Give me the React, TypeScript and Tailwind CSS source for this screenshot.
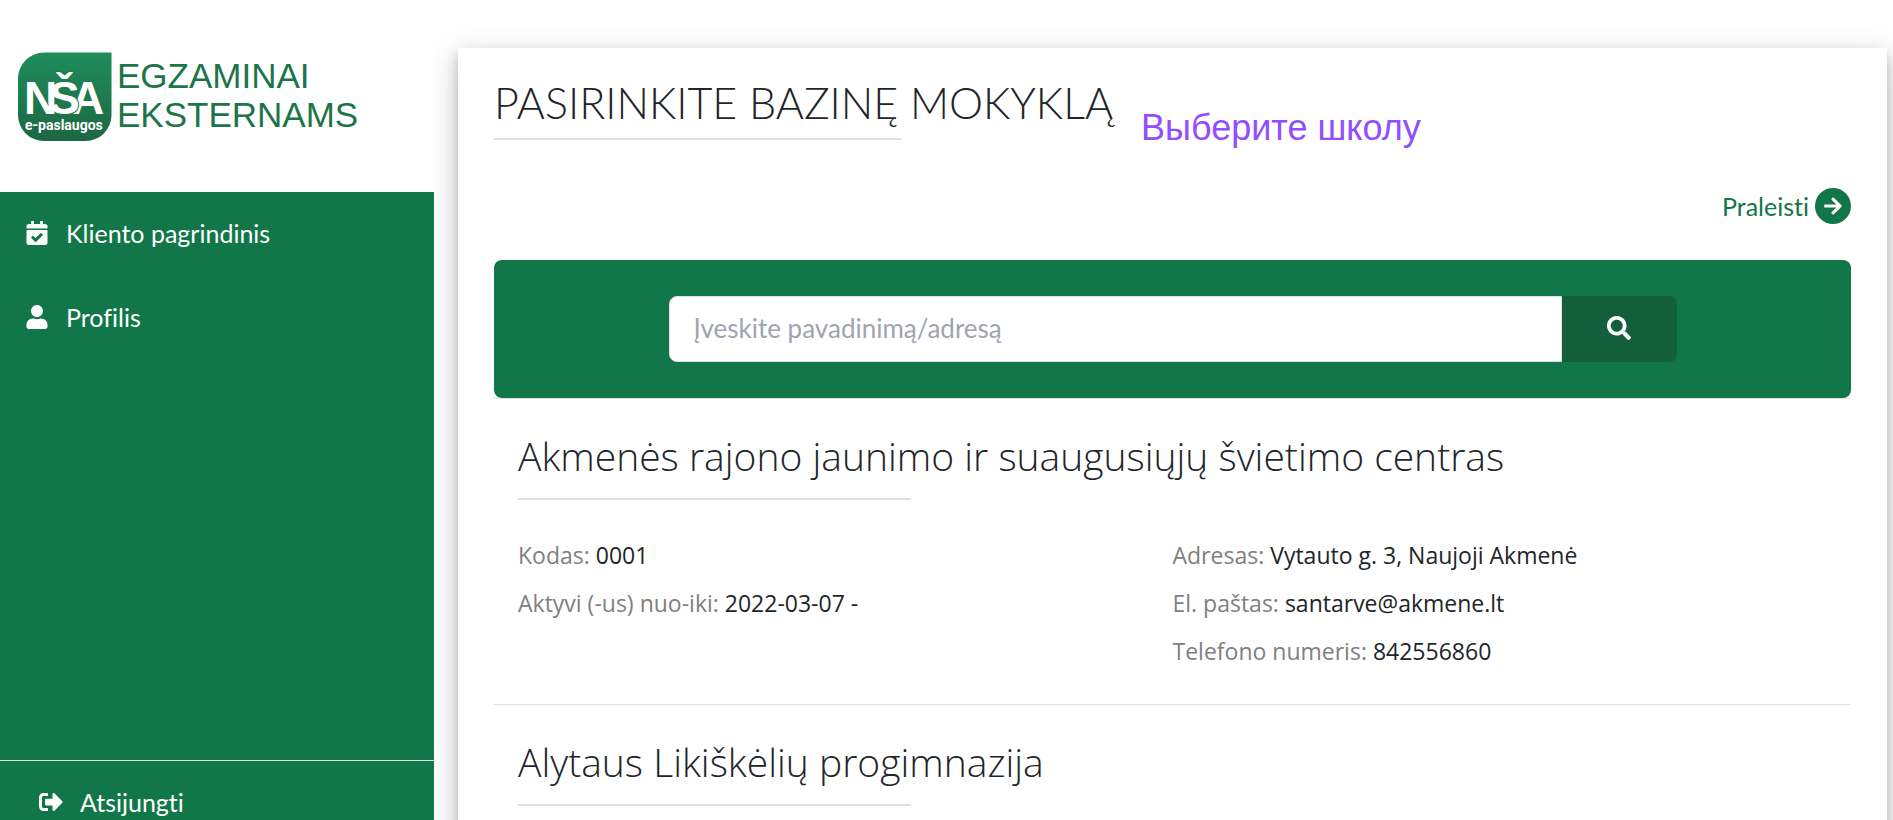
import type { IconType } from 'react-icons'
import { FaArrowRight, FaCalendarCheck, FaSearch, FaSignOutAlt, FaUser } from 'react-icons/fa'

interface School {
    name: string
    left: [string, string][]
    right: [string, string][]
}

const schools: School[] = [
    {
        name: 'Akmenės rajono jaunimo ir suaugusiųjų švietimo centras',
        left: [
            ['Kodas:', '0001'],
            ['Aktyvi (-us) nuo-iki:', '2022-03-07 -'],
        ],
        right: [
            ['Adresas:', 'Vytauto g. 3, Naujoji Akmenė'],
            ['El. paštas:', 'santarve@akmene.lt'],
            ['Telefono numeris:', '842556860'],
        ],
    },
    {
        name: 'Alytaus Likiškėlių progimnazija',
        left: [],
        right: [],
    },
]

function Logo() {
    return (
        <svg width="94" height="90" viewBox="0 0 94 90" role="img" aria-label="NŠA e-paslaugos">
            <defs>
                <linearGradient id="logo-bg" x1="0" y1="0" x2="0" y2="1">
                    <stop offset="0" stopColor="#1f8d5b" />
                    <stop offset="1" stopColor="#1d6742" />
                </linearGradient>
            </defs>
            <path
                d="M26 0.5H93.5V63a26 26 0 0 1-26 26H26A26 26 0 0 1 0 63V26A26 26 0 0 1 26 0.5Z"
                fill="url(#logo-bg)"
            />
            <g fill="#fff" fontFamily="'Liberation Sans', sans-serif" fontWeight="700" fontSize="46">
                <text x="53" y="62">A</text>
                <text x="31" y="62" stroke="#1e7a4e" strokeWidth="2" paintOrder="stroke">Š</text>
                <text x="6" y="62">N</text>
            </g>
            <text x="7" y="78" fill="#fff" fontFamily="Roboto, sans-serif" fontWeight="700" fontSize="14">
                e-paslaugos
            </text>
        </svg>
    )
}

function NavItem({ icon: Icon, label }: { icon: IconType; label: string }) {
    return (
        <a href="#" className="flex h-[84px] items-center gap-[17px] px-[25px] pb-[2px]">
            <Icon className="size-6" />
            {label}
        </a>
    )
}

function Sidebar() {
    return (
        <aside className="z-10 flex h-screen w-[434px] shrink-0 flex-col bg-white">
            <div className="flex h-48 shrink-0 items-start gap-[5px] pt-[52px] pl-[18px]">
                <Logo />
                <div className="pt-1 font-['Liberation_Sans',sans-serif] text-[35px] leading-[39px] text-[#1c7549]">
                    EGZAMINAI
                    <br />
                    EKSTERNAMS
                </div>
            </div>
            <nav className="flex-1 bg-[#117748] text-white">
                <NavItem icon={FaCalendarCheck} label="Kliento pagrindinis" />
                <NavItem icon={FaUser} label="Profilis" />
            </nav>
            <div className="h-[60px] shrink-0 border-t border-[#dee2e6] bg-[#117748] pt-[23px] pl-[39px] text-white">
                <a href="#" className="flex items-center gap-[17px]">
                    <FaSignOutAlt className="size-6" />
                    Atsijungti
                </a>
            </div>
        </aside>
    )
}

function Fields({ items }: { items: [string, string][] }) {
    return (
        <dl className="w-1/2">
            {items.map(([label, value]) => (
                <div key={label} className="flex gap-[6px]">
                    <dt className="text-[#808080]">{label}</dt>
                    <dd>{value}</dd>
                </div>
            ))}
        </dl>
    )
}

function SchoolItem({ school }: { school: School }) {
    return (
        <li className="border-t border-[#dee2e6] px-6 pt-8 pb-[29px] font-['Open_Sans',sans-serif]">
            <h2 className="text-[39px] leading-[50px] font-light">{school.name}</h2>
            <div className="mt-[17px] h-[2px] w-[30%] bg-[#dfe0e6]" />
            <div className="flex pt-[31px] text-[23px] leading-[48px]">
                <Fields items={school.left} />
                <Fields items={school.right} />
            </div>
        </li>
    )
}

export default function App() {
    return (
        <div className="flex h-screen overflow-hidden bg-white font-[Lato,sans-serif] text-[25px] leading-9 text-[#212529] [font-variant-ligatures:none]">
            <Sidebar />
            <main className="flex-1 pt-12 pr-[6px] pl-6">
                <div className="min-h-screen bg-white px-9 pt-[30px] shadow-[0_6px_12px_rgba(0,0,0,0.2),0_9px_30px_rgba(0,0,0,0.19)]">
                    <div className="flex items-end gap-7">
                        <h1 className="text-[43px] leading-[50px] font-light">PASIRINKITE BAZINĘ MOKYKLĄ</h1>
                        {/* Translation note, hangs slightly below the heading */}
                        <div className="relative">
                            <span className="absolute top-[-21px] left-0 font-['Liberation_Sans',sans-serif] text-[36px] leading-[42px] whitespace-nowrap text-[#914dff]">
                                Выберите школу
                            </span>
                        </div>
                    </div>
                    <div className="mt-[10px] h-[2px] w-[30%] bg-[#dfe0e6]" />

                    <div className="mt-12 flex justify-end">
                        <a href="#" className="flex items-center gap-[6px] text-[#117748]">
                            Praleisti
                            <span className="flex size-9 items-center justify-center rounded-full bg-[#117748] text-white">
                                <FaArrowRight className="size-5" />
                            </span>
                        </a>
                    </div>

                    <form className="mt-9 flex justify-center rounded-lg bg-[#117748] py-9" onSubmit={(e) => e.preventDefault()}>
                        <div className="flex h-[66px] w-full max-w-[1008px]">
                            <input
                                type="text"
                                aria-label="Įveskite pavadinimą/adresą"
                                placeholder="Įveskite pavadinimą/adresą"
                                className="min-w-0 flex-1 rounded-l-lg border border-[#dee2e6] bg-white px-6 pb-[2px] text-[26px] placeholder:text-[#a0a4b0]"
                            />
                            <button
                                type="submit"
                                aria-label="Ieškoti"
                                className="flex w-[115px] items-center justify-center rounded-r-lg bg-[#145f3b] pb-[2px] text-white"
                            >
                                <FaSearch className="size-6" />
                            </button>
                        </div>
                    </form>

                    <ul>
                        {schools.map((school) => (
                            <SchoolItem key={school.name} school={school} />
                        ))}
                    </ul>
                </div>
            </main>
        </div>
    )
}
